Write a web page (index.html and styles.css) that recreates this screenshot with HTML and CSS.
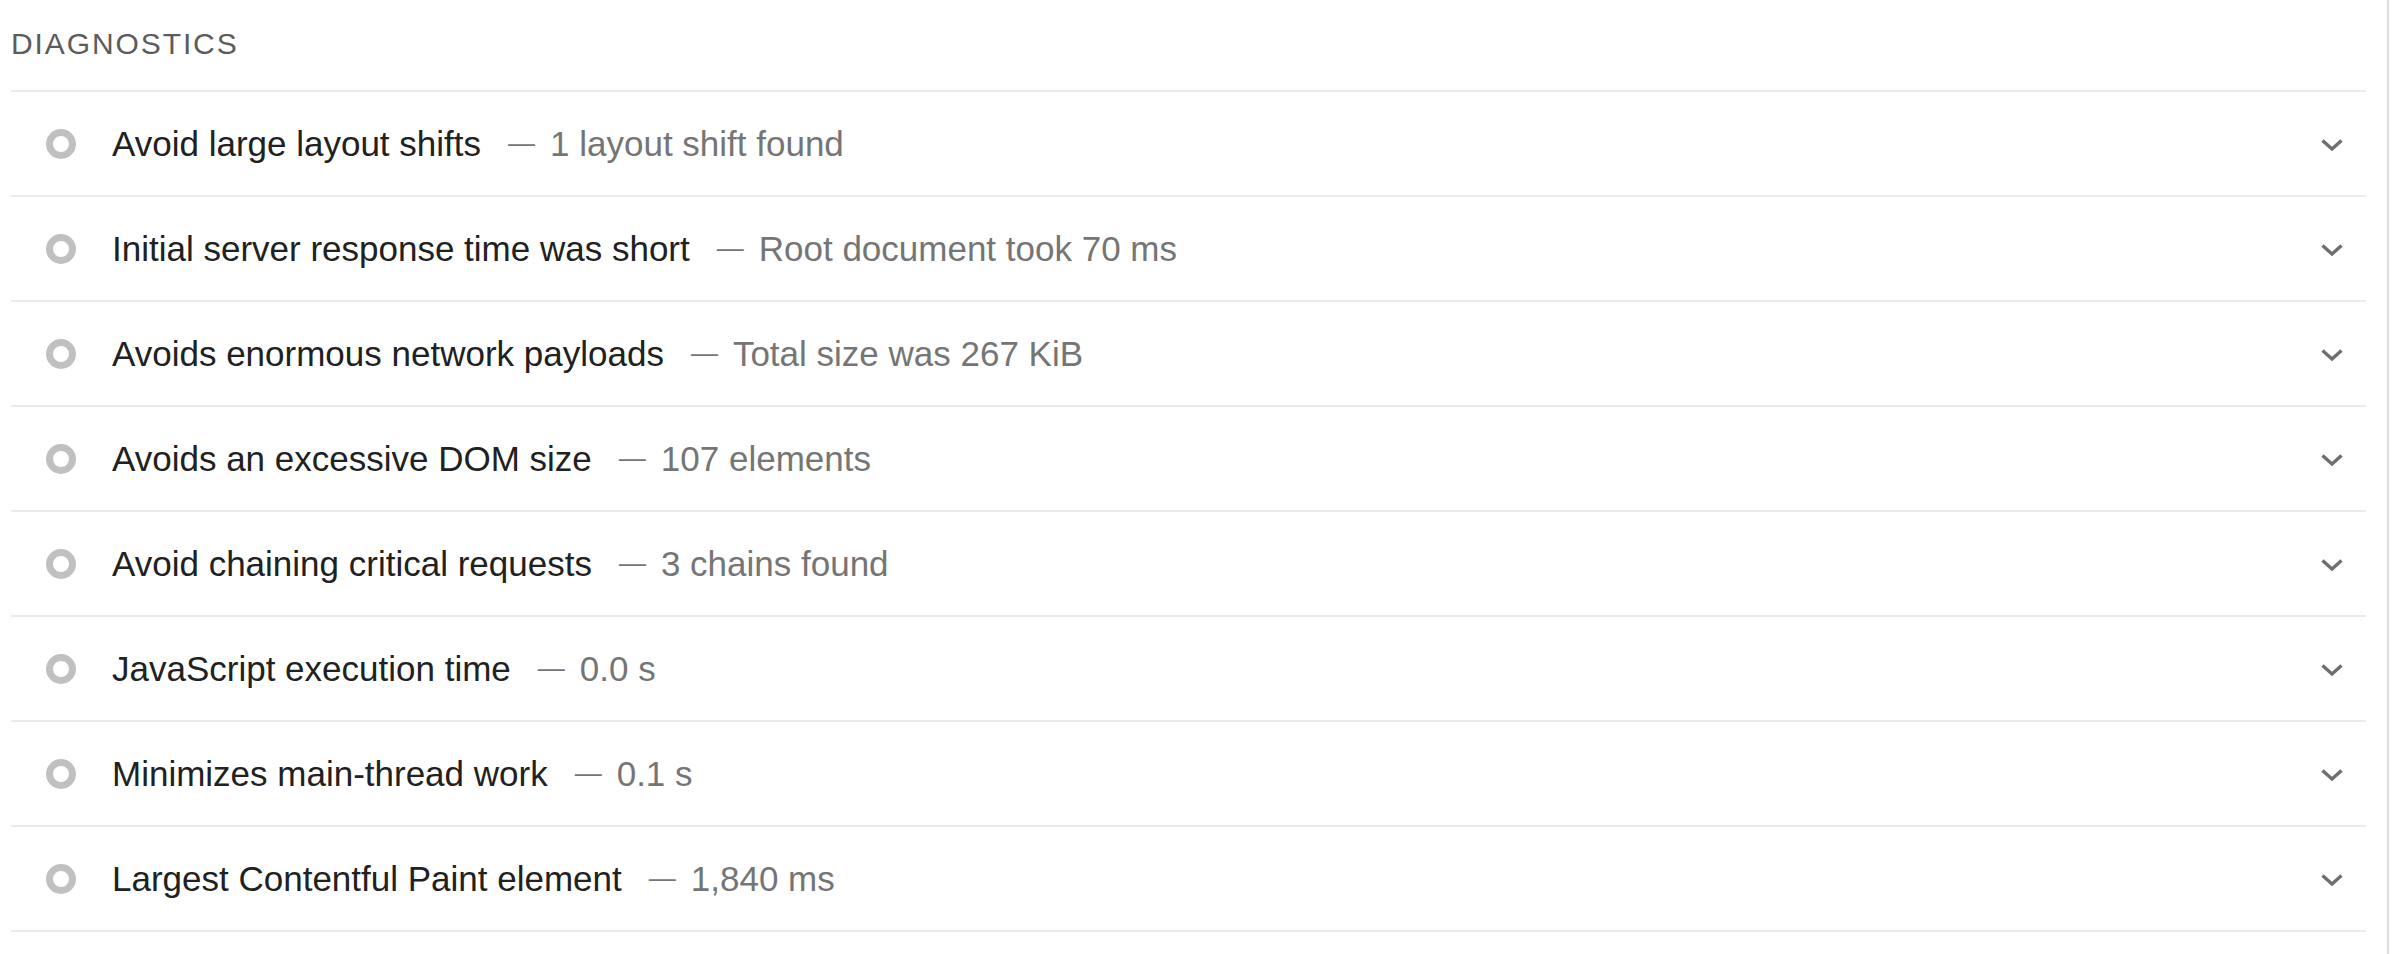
FILE: index.html
```html
<!DOCTYPE html>
<html lang="en">
<head>
<meta charset="utf-8">
<title>Diagnostics</title>
<link rel="stylesheet" href="styles.css">
</head>
<body>
<div class="report">
  <section class="group">
    <div class="group-header">Diagnostics</div>
    <div class="audit">
      <span class="score-icon"></span>
      <span class="title">Avoid large layout shifts</span>
      <span class="sep">—</span>
      <span class="display">1 layout shift found</span>
      <svg class="chevron" viewBox="0 0 22 12" width="22" height="12"><path d="M1.5 1.5 L11 10 L20.5 1.5"/></svg>
    </div>
    <div class="audit">
      <span class="score-icon"></span>
      <span class="title">Initial server response time was short</span>
      <span class="sep">—</span>
      <span class="display">Root document took 70 ms</span>
      <svg class="chevron" viewBox="0 0 22 12" width="22" height="12"><path d="M1.5 1.5 L11 10 L20.5 1.5"/></svg>
    </div>
    <div class="audit">
      <span class="score-icon"></span>
      <span class="title">Avoids enormous network payloads</span>
      <span class="sep">—</span>
      <span class="display">Total size was 267 KiB</span>
      <svg class="chevron" viewBox="0 0 22 12" width="22" height="12"><path d="M1.5 1.5 L11 10 L20.5 1.5"/></svg>
    </div>
    <div class="audit">
      <span class="score-icon"></span>
      <span class="title">Avoids an excessive DOM size</span>
      <span class="sep">—</span>
      <span class="display">107 elements</span>
      <svg class="chevron" viewBox="0 0 22 12" width="22" height="12"><path d="M1.5 1.5 L11 10 L20.5 1.5"/></svg>
    </div>
    <div class="audit">
      <span class="score-icon"></span>
      <span class="title">Avoid chaining critical requests</span>
      <span class="sep">—</span>
      <span class="display">3 chains found</span>
      <svg class="chevron" viewBox="0 0 22 12" width="22" height="12"><path d="M1.5 1.5 L11 10 L20.5 1.5"/></svg>
    </div>
    <div class="audit">
      <span class="score-icon"></span>
      <span class="title">JavaScript execution time</span>
      <span class="sep">—</span>
      <span class="display">0.0 s</span>
      <svg class="chevron" viewBox="0 0 22 12" width="22" height="12"><path d="M1.5 1.5 L11 10 L20.5 1.5"/></svg>
    </div>
    <div class="audit">
      <span class="score-icon"></span>
      <span class="title">Minimizes main-thread work</span>
      <span class="sep">—</span>
      <span class="display">0.1 s</span>
      <svg class="chevron" viewBox="0 0 22 12" width="22" height="12"><path d="M1.5 1.5 L11 10 L20.5 1.5"/></svg>
    </div>
    <div class="audit">
      <span class="score-icon"></span>
      <span class="title">Largest Contentful Paint element</span>
      <span class="sep">—</span>
      <span class="display">1,840 ms</span>
      <svg class="chevron" viewBox="0 0 22 12" width="22" height="12"><path d="M1.5 1.5 L11 10 L20.5 1.5"/></svg>
    </div>
  </section>
</div>
</body>
</html>
```

FILE: styles.css
```css
html, body {
  margin: 0;
  padding: 0;
  background: #ffffff;
}

body {
  font-family: "Liberation Sans", Arial, Helvetica, sans-serif;
}

.report {
  box-sizing: border-box;
  width: 2389px;
  min-height: 100vh;
  border-right: 2px solid #dcdce1;
  padding: 0 21px 0 11px;
}

.group-header {
  padding: 24px 0 26px 0;
  line-height: 40px;
  font-size: 30px;
  letter-spacing: 1.9px;
  text-transform: uppercase;
  color: #5c5c5c;
  border-bottom: 2px solid #ebebeb;
}

.audit {
  display: flex;
  align-items: center;
  height: 103px;
  border-bottom: 2px solid #ebebeb;
  font-size: 35px;
  white-space: nowrap;
}

.score-icon {
  box-sizing: border-box;
  flex: none;
  width: 30px;
  height: 30px;
  margin: 0 36px 0 35px;
  border-radius: 50%;
  border: 7px solid #c0c0c0;
}

.title {
  color: #212121;
}

.sep {
  color: #757575;
  font-size: 27px;
  margin: 0 15px 0 27px;
}

.display {
  color: #757575;
}

.chevron {
  flex: none;
  margin: 3px 23px 0 auto;
  overflow: visible;
}

.chevron path {
  fill: none;
  stroke: #6f6f6f;
  stroke-width: 3.4;
}
```
